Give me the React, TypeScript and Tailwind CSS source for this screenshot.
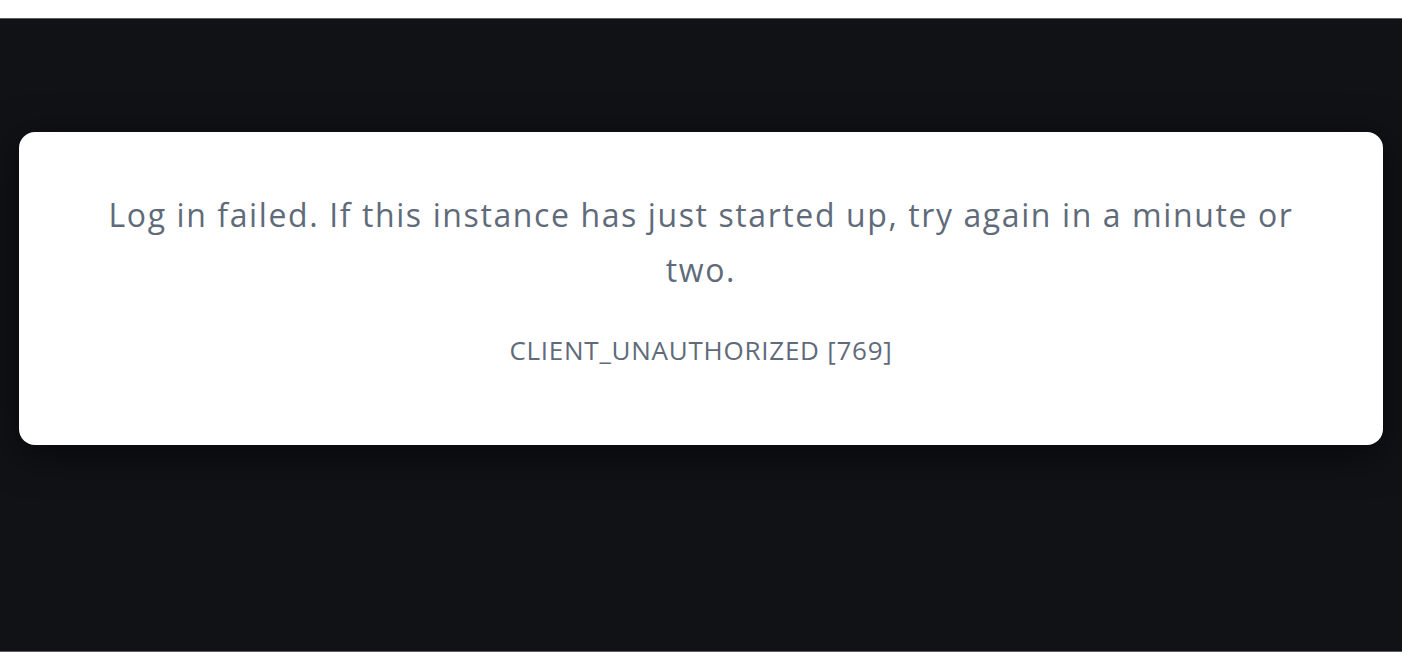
export default function App() {
  return (
    <div className="flex h-[652px] w-[1402px] flex-col bg-white font-['Open_Sans',sans-serif]">
      <div className="h-[18px] shrink-0 bg-white" />
      <div className="h-px shrink-0 bg-[#5a5c61]" />
      <div className="flex flex-1 flex-col bg-[#111216] px-[19px] pt-[113px]">
        <div className="flex h-[313px] flex-col items-center rounded-[16px] bg-white px-[80px] pt-[55px] text-center text-[#5f6b7a] shadow-[0_8px_40px_rgba(0,0,0,0.6)]">
          <p className="text-[32px] leading-[55px] tracking-[1.6px]">
            Log in failed. If this instance has just started up, try again in a minute or two.
          </p>
          <p className="mt-[37px] text-[26px] leading-[32px] tracking-[0.75px]">CLIENT_UNAUTHORIZED [769]</p>
        </div>
      </div>
      <div className="h-px shrink-0 bg-[#5a5c61]" />
    </div>
  );
}
